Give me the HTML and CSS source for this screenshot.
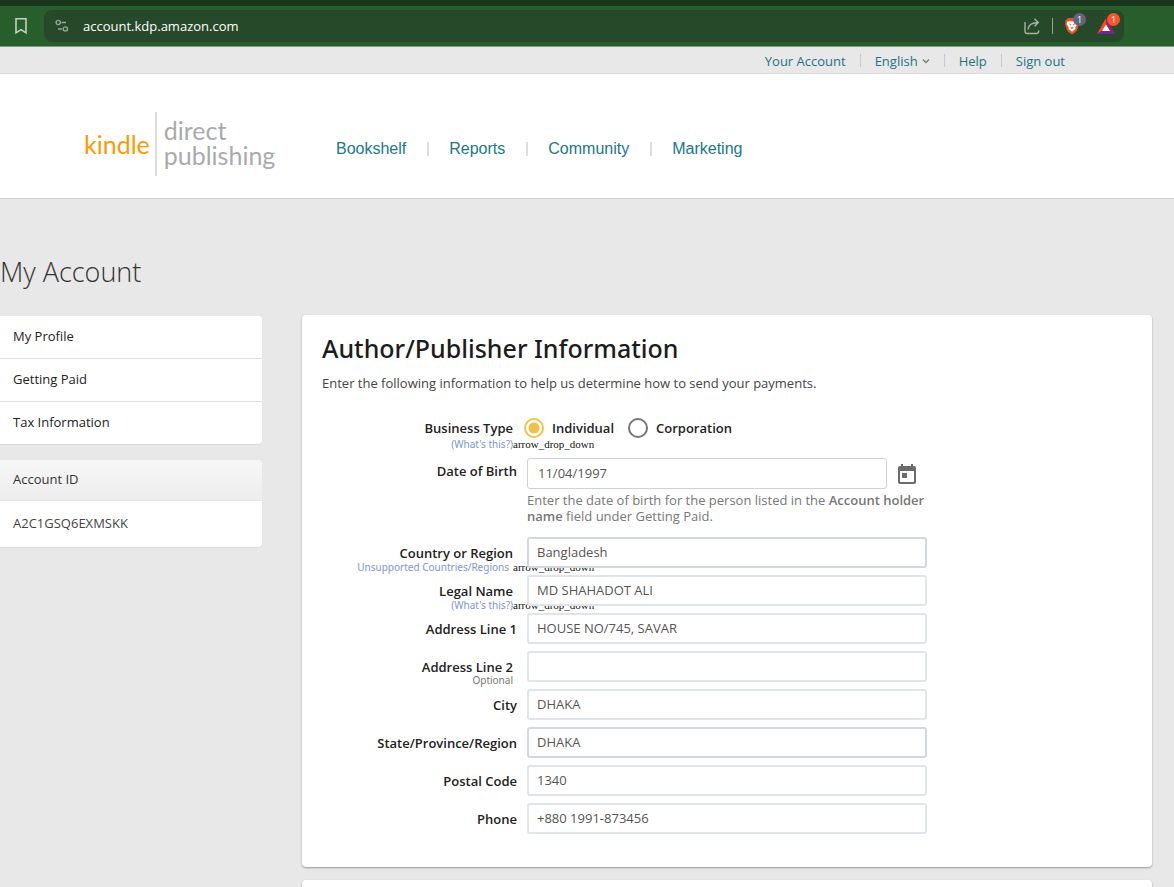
FILE: index.html
```html
<!DOCTYPE html>
<html lang="en">
<head>
<meta charset="utf-8">
<title>My Account</title>
<link rel="stylesheet" href="styles.css">
</head>
<body>
<div class="browser">
  <button class="bookmark" aria-label="Bookmark">
    <svg width="14" height="18" viewBox="0 0 14 18" fill="none" stroke="#c3d2c2" stroke-width="1.6"><path d="M2 1.8h10v14L7 12.6 2 15.8z"/></svg>
  </button>
  <div class="address">
    <svg class="tune" width="14" height="14" viewBox="0 0 14 14" fill="none" stroke="#98a898" stroke-width="1.4"><circle cx="3.2" cy="3.5" r="2.1"/><path d="M6.5 3.5H11M3 10H7"/><circle cx="10.4" cy="10" r="2.1"/></svg>
    <span class="url">account.kdp.amazon.com</span>
    <svg class="share" width="18" height="18" viewBox="0 0 18 18" fill="none" stroke="#a5b3a5" stroke-width="1.4"><path d="M2 5v9.200q0 2.300 2.300 2.300h9q2.300 0 2.300-2.300V13.500"/><path d="M5 12.500q.6-7 10.500-7M11.500 1.800l3.800 3.700-3.800 3.700"/></svg>
    <span class="split"></span>
    <span class="ext">
      <svg width="16" height="18" viewBox="0 0 16 18"><path fill="#f4511e" d="M4 1h8l1.500 1.700L15 3.500l-.5 2 .5 1.300-2 6.500Q12 15 8 17.500 4 15 3 13.300L1 6.800l.5-1.300-.5-2 1.500-.8z"/><path fill="#fff" d="M3.500 4.500 6 4l2 .6L10 4l2.500.5L13.500 7l-2.300 3.500.2 1.500L8 14.800 4.600 12l.2-1.500L2.500 7z"/><path fill="#f4511e" d="M4.500 6.300 7 7.200l-.5 1.200zM11.500 6.300 9 7.200l.5 1.200zM6.300 10.800 8 10l1.700.8L8 12z"/></svg>
      <span class="count count-grey">1</span>
    </span>
    <span class="ext">
      <svg width="18" height="16" viewBox="0 0 18 16"><path fill="#ff4724" d="M9 0 0 16l9-5.500z"/><path fill="#9e1f63" d="m9 0 9 16-9-5.500z"/><path fill="#662d91" d="M0 16h18l-5-3.500H5z"/><path fill="#fff" d="m9 6.500 4 6.500H5z"/></svg>
      <span class="count count-red">1</span>
    </span>
  </div>
</div>

<nav class="utility">
  <a href="#">Your Account</a>
  <a href="#">English <svg width="8" height="6" viewBox="0 0 8 6" fill="none" stroke="#777" stroke-width="1.300"><path d="m1 1.500 3 3 3-3"/></svg></a>
  <a href="#">Help</a>
  <a href="#">Sign out</a>
</nav>

<header class="masthead">
  <a class="logo" href="#"><span class="kindle">kindle</span><span class="direct">direct<br>publishing</span></a>
  <nav class="menu">
    <a href="#">Bookshelf</a>
    <a href="#">Reports</a>
    <a href="#">Community</a>
    <a href="#">Marketing</a>
  </nav>
</header>

<main class="page">
  <h1>My Account</h1>
  <div class="columns">
    <aside class="side">
      <nav class="box">
        <a href="#">My Profile</a>
        <a href="#">Getting Paid</a>
        <a href="#">Tax Information</a>
      </nav>
      <section class="box">
        <h2 class="box-head">Account ID</h2>
        <p class="box-text">A2C1GSQ6EXMSKK</p>
      </section>
    </aside>
    <div class="content">
      <form class="card">
        <h2>Author/Publisher Information</h2>
        <p class="intro">Enter the following information to help us determine how to send your payments.</p>

        <div class="row row-type" role="radiogroup" aria-labelledby="type">
          <div class="label noted"><span id="type">Business Type</span>
            <div class="note"><a href="#">(What's this?)</a><span class="arrow">arrow_drop_down</span></div></div>
          <div class="radios">
            <label><input type="radio" name="type" checked>Individual</label>
            <label><input type="radio" name="type">Corporation</label>
          </div>
        </div>
        <div class="row row-birth">
          <div class="label"><label for="birth">Date of Birth</label></div>
          <div class="field">
            <div class="date">
              <input id="birth" type="text" value="11/04/1997">
              <button type="button" class="calendar" aria-label="Choose date">
                <svg width="20" height="22" viewBox="0 0 20 22"><path fill="#6b6b6b" fill-rule="evenodd" d="M4 1h2v2h8V1h2v2h1q2 0 2 2v14q0 2-2 2H3q-2 0-2-2V5q0-2 2-2h1zM3 8v11h14V8z"/><path fill="#6b6b6b" d="M5 10h5v5H5z"/></svg>
              </button>
            </div>
            <p class="help">Enter the date of birth for the person listed in the <b>Account holder name</b> field under Getting Paid.</p>
          </div>
        </div>
        <div class="row">
          <div class="label noted"><label for="country">Country or Region</label>
            <div class="note"><a class="spaced" href="#">Unsupported Countries/Regions</a><span class="arrow">arrow_drop_down</span></div></div>
          <div class="field"><input id="country" class="pick" type="text" value="Bangladesh"></div>
        </div>
        <div class="row">
          <div class="label noted"><label for="legal">Legal Name</label>
            <div class="note"><a href="#">(What's this?)</a><span class="arrow">arrow_drop_down</span></div></div>
          <div class="field"><input id="legal" type="text" value="MD SHAHADOT ALI"></div>
        </div>
        <div class="row">
          <div class="label"><label for="line1">Address Line 1</label></div>
          <div class="field"><input id="line1" type="text" value="HOUSE NO/745, SAVAR"></div>
        </div>
        <div class="row">
          <div class="label noted"><label for="line2">Address Line 2</label>
            <div class="note optional">Optional</div></div>
          <div class="field"><input id="line2" type="text"></div>
        </div>
        <div class="row">
          <div class="label"><label for="city">City</label></div>
          <div class="field"><input id="city" type="text" value="DHAKA"></div>
        </div>
        <div class="row">
          <div class="label"><label for="state">State/Province/Region</label></div>
          <div class="field"><input id="state" class="pick" type="text" value="DHAKA"></div>
        </div>
        <div class="row">
          <div class="label"><label for="postal">Postal Code</label></div>
          <div class="field"><input id="postal" type="text" value="1340"></div>
        </div>
        <div class="row">
          <div class="label"><label for="phone">Phone</label></div>
          <div class="field"><input id="phone" type="text" value="+880 1991-873456"></div>
        </div>
      </form>
      <section class="card"></section>
    </div>
  </div>
</main>
</body>
</html>
```

FILE: styles.css
```css
* { box-sizing: border-box; }

html { overflow: hidden; }

body {
  margin: 0;
  height: 100vh;
  overflow: hidden;
  background: #e8e8e8;
  color: #222;
  font: 13px/16px "Open Sans", "Noto Sans", sans-serif;
}

a { text-decoration: none; }
h1, h2, p { margin: 0; }
svg { display: block; flex: none; }
button { padding: 0; border: 0; background: none; }

/* Browser toolbar */
.browser {
  display: flex;
  align-items: center;
  height: 47px;
  padding: 4px 50px 0 14px;
  background: #285e2b;
  border-top: 6px solid #1b371b;
  border-bottom: 1px solid #7d9a7e;
}
.bookmark { margin: 0 16px 4px 0; }
.address {
  flex: 1;
  display: flex;
  align-items: center;
  height: 32px;
  margin-bottom: 4px;
  padding: 0 9px 0 11px;
  border-radius: 8px;
  background: #26492a;
}
.url {
  flex: 1;
  margin-left: 14px;
  color: #fff;
  line-height: 18px;
}
.split {
  width: 1px;
  height: 16px;
  margin: 0 11px;
  background: #94a594;
}
.ext { position: relative; width: 16px; }
.ext + .ext { width: 18px; margin-left: 17px; }
.count {
  position: absolute;
  top: -4px;
  left: 9px;
  width: 13px;
  height: 13px;
  border-radius: 50%;
  color: #fff;
  font-size: 9px;
  line-height: 13px;
  text-align: center;
}
.ext + .ext .count { left: 10px; top: -5px; }
.count-grey { background: #62657a; }
.count-red { background: #fb542b; }

/* Account links */
.utility {
  display: flex;
  justify-content: flex-end;
  align-items: center;
  height: 27px;
  padding: 1px 109px 0 0;
  border-bottom: 1px solid #d9d9d9;
}
.utility a {
  display: flex;
  align-items: center;
  gap: 4px;
  color: #1f7285;
  line-height: 16px;
}
.utility a + a::before {
  content: "";
  width: 1px;
  height: 13px;
  margin: 0 10px 0 14px;
  background: #c9c9c9;
}

/* Site header */
.masthead {
  display: flex;
  align-items: flex-start;
  height: 125px;
  padding: 38px 0 0 84px;
  background: #fff;
  border-bottom: 1px solid #d4d4d4;
}
.logo {
  display: flex;
  align-items: center;
  width: 252px;
  font: 25px/25px Lato, sans-serif;
}
.kindle { color: #f90; padding-right: 5px; }
.direct {
  height: 64px;
  padding: 6px 0 0 7px;
  border-left: 2px solid #dcdcdc;
  color: #aaa;
}
.menu {
  display: flex;
  padding-top: 27px;
  font: 16px/20px "Liberation Sans", sans-serif;
}
.menu a { display: flex; align-items: center; color: #1b7789; }
.menu a + a::before {
  content: "";
  width: 2px;
  height: 14px;
  margin: 0 20px 0 21px;
  background: #dcdce2;
}

/* Page body */
.page { padding-right: 22px; }
h1 {
  padding: 56px 0 26px;
  color: #333;
  font: 300 27px/34px "Open Sans", sans-serif;
}
.columns { display: flex; gap: 40px; align-items: flex-start; }
.side { width: 262px; flex: none; padding-top: 1px; }
.box {
  margin-bottom: 16px;
  border-radius: 0 4px 4px 0;
  background: #fff;
  box-shadow: 0 1px 1px #d5dadf;
  overflow: hidden;
}
.box a {
  display: block;
  padding: 12px 13px 14px;
  color: #222;
}
.box a + a { border-top: 1px solid #dce1e6; }
.box-head {
  padding: 11px 13px 13px;
  border-bottom: 1px solid #e7e7e7;
  background: linear-gradient(#f7f7f7, #ededed);
  color: #333;
  font-size: 13px;
  font-weight: 400;
}
.box-text { padding: 14px 13px 16px; color: #444; }

.content { flex: 1; min-width: 0; }
.card {
  min-height: 60px;
  margin-bottom: 13px;
  padding: 16px 20px 26px;
  border-radius: 4px;
  background: #fff;
  box-shadow: 0 1px 2px #999;
}
.card h2 {
  color: #1c1c1c;
  font: 500 25px/34px "Noto Sans", sans-serif;
}
.intro { padding: 10px 0 22px; color: #444; }

/* Form rows: labels right-aligned against the fields */
.row {
  display: grid;
  grid-template-columns: 195px minmax(0, 400px);
  column-gap: 10px;
  min-height: 38px;
}
.row-type { min-height: 45px; }
.row-birth { min-height: 79px; }
.label {
  padding-top: 8px;
  text-align: right;
  font-weight: 600;
}
.row-type .label { padding-top: 7px; }
.row-birth .label { padding-top: 5px; }
.noted { padding-right: 4px; }
.note {
  position: relative;
  font: 10px/12px "Noto Sans", sans-serif;
  color: #7288bd;
}
.note a { color: #7d96cf; }
.spaced { padding-right: 4px; }
.arrow {
  position: absolute;
  left: 100%;
  top: 0;
  color: #111;
  font: 11px/12px "Liberation Serif", serif;
}
.row-type .note { line-height: 16px; }
.row-type .arrow { line-height: 16px; }
.optional { color: #777; line-height: 10px; }
.field { position: relative; z-index: 1; }
input[type="text"] {
  display: block;
  width: 100%;
  height: 31px;
  padding: 0 9px 2px 8px;
  border: 2px solid #e0e5ea;
  border-radius: 3px;
  background: #fff;
  color: #555;
  font: 13px/16px "Open Sans", "Noto Sans", sans-serif;
}
input.pick { border-color: #d3d8dd; }
.date { display: flex; align-items: center; gap: 10px; }
.date input[type="text"] { flex: 1; border-width: 1px; border-color: #cbd3da; padding: 0 10px 2px; }
.calendar { padding-right: 10px; }
.help { margin-right: -12px; padding-top: 3px; color: #777; }
.help b { font-weight: 600; }

.radios {
  display: flex;
  gap: 14px;
  padding: 5px 0 0;
  margin-left: -3px;
  font-weight: 600;
}
.radios label { display: flex; align-items: center; gap: 8px; height: 20px; }
.radios input {
  appearance: none;
  width: 20px;
  height: 20px;
  margin: 0;
  border: 2px solid #777;
  border-radius: 50%;
}
.radios input:checked {
  border-color: #f0c14b;
  background: radial-gradient(circle, #f0c14b 5px, transparent 6px);
}
```
